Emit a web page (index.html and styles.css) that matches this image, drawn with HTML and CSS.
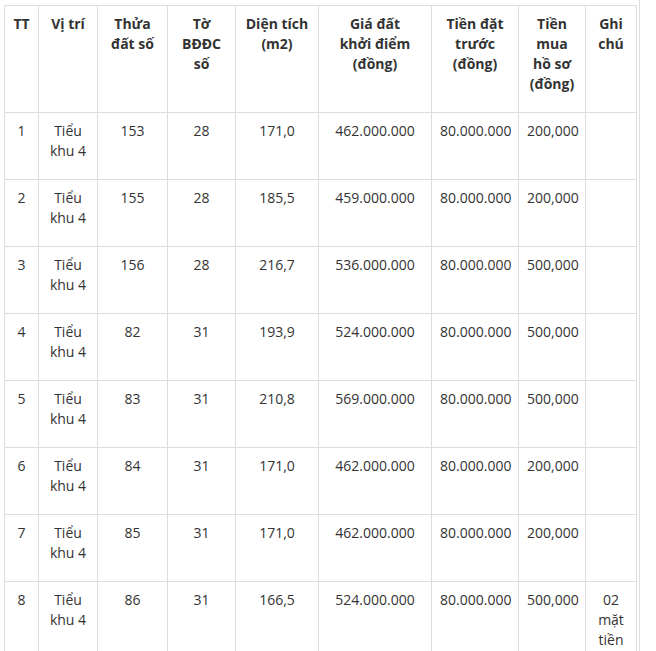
FILE: index.html
```html
<!DOCTYPE html>
<html lang="vi">
<head>
<meta charset="utf-8">
<title>Bảng giá đất</title>
<link rel="stylesheet" href="styles.css">
</head>
<body>
<div class="wrap">
<table class="land">
<colgroup>
<col class="c1"><col class="c2"><col class="c3"><col class="c4"><col class="c5"><col class="c6"><col class="c7"><col class="c8"><col class="c9">
</colgroup>
<thead>
<tr>
<th><p>TT</p></th>
<th><p>Vị trí</p></th>
<th><p>Thửa<br>đất số</p></th>
<th><p>Tờ<br>BĐĐC<br>số</p></th>
<th><p>Diện tích<br>(m2)</p></th>
<th><p>Giá đất<br>khởi điểm<br>(đồng)</p></th>
<th><p>Tiền đặt<br>trước<br>(đồng)</p></th>
<th><p>Tiền<br>mua<br>hồ sơ<br>(đồng)</p></th>
<th><p>Ghi<br>chú</p></th>
</tr>
</thead>
<tbody>
<tr><td><p>1</p></td><td><p>Tiểu<br>khu 4</p></td><td><p>153</p></td><td><p>28</p></td><td><p>171,0</p></td><td><p>462.000.000</p></td><td><p>80.000.000</p></td><td><p>200,000</p></td><td></td></tr>
<tr><td><p>2</p></td><td><p>Tiểu<br>khu 4</p></td><td><p>155</p></td><td><p>28</p></td><td><p>185,5</p></td><td><p>459.000.000</p></td><td><p>80.000.000</p></td><td><p>200,000</p></td><td></td></tr>
<tr><td><p>3</p></td><td><p>Tiểu<br>khu 4</p></td><td><p>156</p></td><td><p>28</p></td><td><p>216,7</p></td><td><p>536.000.000</p></td><td><p>80.000.000</p></td><td><p>500,000</p></td><td></td></tr>
<tr><td><p>4</p></td><td><p>Tiểu<br>khu 4</p></td><td><p>82</p></td><td><p>31</p></td><td><p>193,9</p></td><td><p>524.000.000</p></td><td><p>80.000.000</p></td><td><p>500,000</p></td><td></td></tr>
<tr><td><p>5</p></td><td><p>Tiểu<br>khu 4</p></td><td><p>83</p></td><td><p>31</p></td><td><p>210,8</p></td><td><p>569.000.000</p></td><td><p>80.000.000</p></td><td><p>500,000</p></td><td></td></tr>
<tr><td><p>6</p></td><td><p>Tiểu<br>khu 4</p></td><td><p>84</p></td><td><p>31</p></td><td><p>171,0</p></td><td><p>462.000.000</p></td><td><p>80.000.000</p></td><td><p>200,000</p></td><td></td></tr>
<tr><td><p>7</p></td><td><p>Tiểu<br>khu 4</p></td><td><p>85</p></td><td><p>31</p></td><td><p>171,0</p></td><td><p>462.000.000</p></td><td><p>80.000.000</p></td><td><p>200,000</p></td><td></td></tr>
<tr><td><p>8</p></td><td><p>Tiểu<br>khu 4</p></td><td><p>86</p></td><td><p>31</p></td><td><p>166,5</p></td><td><p>524.000.000</p></td><td><p>80.000.000</p></td><td><p>500,000</p></td><td><p>02<br>mặt<br>tiền</p></td></tr>
</tbody>
</table>
</div>
</body>
</html>
```
FILE: styles.css
```css
html, body {
  margin: 0;
  padding: 0;
  background: #fff;
}
body {
  font-family: "Open Sans", "Liberation Sans", sans-serif;
  font-size: 14px;
  line-height: 20px;
  color: #333;
}
.wrap {
  width: 635px;
  min-height: 700px;
  padding: 5px 0 0 4px;
  border-right: 1px solid #ddd;
}
.land {
  border-collapse: collapse;
  table-layout: fixed;
  width: 633px;
}
.land th,
.land td {
  border: 1px solid #ddd;
  padding: 8px;
  text-align: center;
  vertical-align: top;
}
.land th {
  font-weight: 700;
}
.land p {
  margin: 0 0 10px;
}
.c1 { width: 34px; }
.c2 { width: 59px; }
.c3 { width: 70px; }
.c4 { width: 68px; }
.c5 { width: 83px; }
.c6 { width: 113px; }
.c7 { width: 87px; }
.c8 { width: 67px; }
.c9 { width: 51px; }
```
